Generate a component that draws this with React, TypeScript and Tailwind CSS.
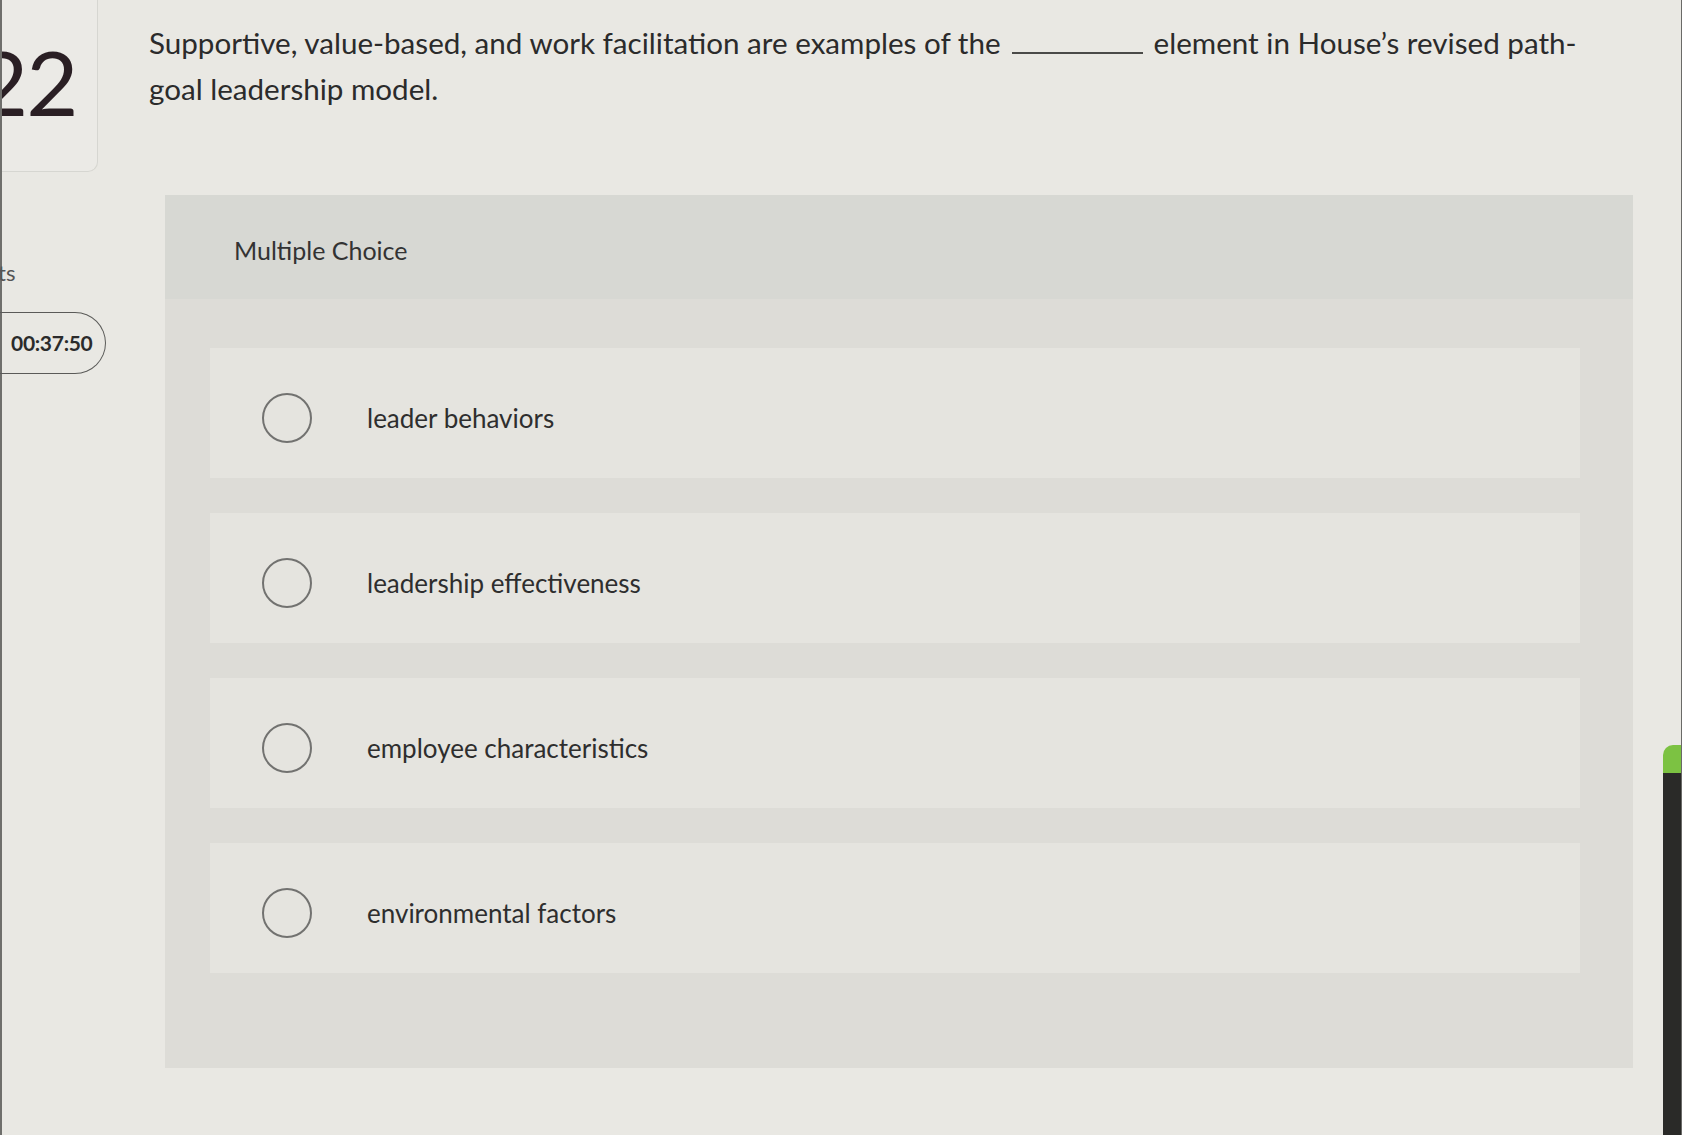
const options = [
    'leader behaviors',
    'leadership effectiveness',
    'employee characteristics',
    'environmental factors',
];

export default function App() {
    return (
        <div
            className="flex w-full h-[1135px] overflow-hidden bg-[#e9e8e3] text-[#2e2e2e]"
            style={{ fontFamily: 'Lato, "Open Sans", sans-serif' }}
        >
            {/* Left rail */}
            <div className="w-[106px] shrink-0 flex flex-col border-l-2 border-[#6f6f6c]">
                <div className="w-[96px] h-[172px] bg-[#ebeae6] border-r border-b border-[#d6d6d1] rounded-br-[10px] overflow-hidden pt-[36px]">
                    <div className="ml-[-26px] text-[90px] leading-none font-normal text-[#2a1f24] tracking-[-2px]">22</div>
                </div>
                <div className="mt-[86px] ml-[-4px] text-[22px] leading-[30px] text-[#555]">ts</div>
                <div className="mt-[24px] ml-[-2px] w-[106px] h-[62px] flex items-center pl-[11px] border-y-[1.5px] border-r-[1.5px] border-[#5a5a58] rounded-r-[31px] text-[21px] font-bold text-[#2b2b2b] tracking-[-0.3px]">
                    00:37:50
                </div>
            </div>

            {/* Main column */}
            <div className="flex-1 flex flex-col">
                <p className="pl-[43px] pt-[20px] text-[29.6px] leading-[46px] text-[#2b2b2b]">
                    Supportive, value-based, and work facilitation are examples of the
                    <span className="inline-block w-[131px] h-[20px] border-b-2 border-[#4a4a48] mx-[11px]"></span>
                    element in House’s revised path-
                    <br />
                    goal leadership model.
                </p>

                <div className="mt-[83px] ml-[59px] mr-[30px] bg-[#dddcd7] pb-[95px]">
                    <div className="h-[104px] bg-[#d7d8d3] flex items-center pt-[8px] pl-[69px]">
                        <span className="text-[25px] text-[#333]">Multiple Choice</span>
                    </div>

                    <div className="mt-[49px] ml-[45px] mr-[53px] flex flex-col gap-[35px]">
                        {options.map((o) => (
                            <div key={o} className="h-[130px] bg-[#e5e4df] pt-[45px] pl-[52px]">
                                <div className="flex items-center">
                                    <div className="w-[50px] h-[50px] rounded-full border-2 border-[#727270] shrink-0"></div>
                                    <span className="ml-[55px] text-[26px] text-[#2e2e2e]">{o}</span>
                                </div>
                            </div>
                        ))}
                    </div>
                </div>
            </div>

            {/* Right edge bar */}
            <div className="w-[19px] shrink-0 flex flex-col border-r border-[#6a6a68]">
                <div className="h-[745px]"></div>
                <div className="h-[28px] bg-[#7cc242] rounded-tl-[10px]"></div>
                <div className="flex-1 bg-[#2a2a28]"></div>
            </div>
        </div>
    );
}
